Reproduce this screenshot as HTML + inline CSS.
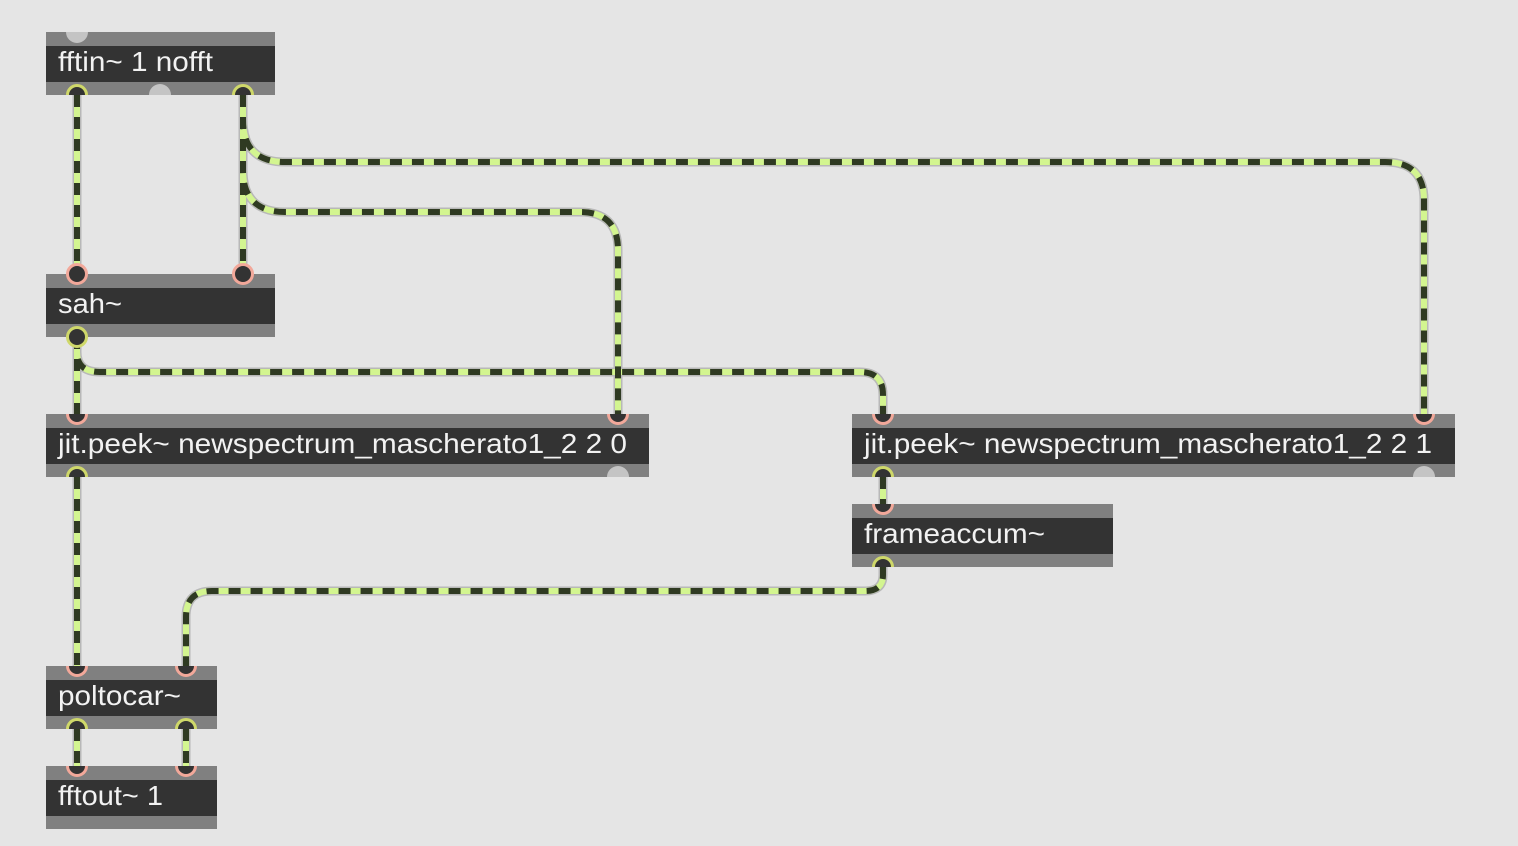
<!DOCTYPE html>
<html><head><style>
html,body{margin:0;padding:0;background:#e5e5e5;width:1518px;height:846px;overflow:hidden}
svg{display:block}
text{font-family:"Liberation Sans",Helvetica,Arial,sans-serif;font-size:28px;fill:#f2f2f2}
</style></head><body>
<svg width="1518" height="846" viewBox="0 0 1518 846">
<defs>
<clipPath id="c1"><rect x="46" y="32" width="229" height="63"/></clipPath>
<clipPath id="c3"><rect x="46" y="414" width="603" height="63"/></clipPath>
<clipPath id="c4"><rect x="852" y="414" width="603" height="63"/></clipPath>
<clipPath id="c5"><rect x="852" y="504" width="261" height="63"/></clipPath>
<clipPath id="c6"><rect x="46" y="666" width="171" height="63"/></clipPath>
<clipPath id="c7"><rect x="46" y="766" width="171" height="63"/></clipPath>
</defs>
<g id="boxes">
<rect x="46" y="32" width="229" height="63" fill="#808080"/><rect x="46" y="46" width="229" height="36" fill="#333"/>
<rect x="46" y="274" width="229" height="63" fill="#808080"/><rect x="46" y="288" width="229" height="36" fill="#333"/>
<rect x="46" y="414" width="603" height="63" fill="#808080"/><rect x="46" y="428" width="603" height="36" fill="#333"/>
<rect x="852" y="414" width="603" height="63" fill="#808080"/><rect x="852" y="428" width="603" height="36" fill="#333"/>
<rect x="852" y="504" width="261" height="63" fill="#808080"/><rect x="852" y="518" width="261" height="36" fill="#333"/>
<rect x="46" y="666" width="171" height="63" fill="#808080"/><rect x="46" y="680" width="171" height="36" fill="#333"/>
<rect x="46" y="766" width="171" height="63" fill="#808080"/><rect x="46" y="780" width="171" height="36" fill="#333"/>
</g>
<text x="58" y="71" textLength="155" lengthAdjust="spacingAndGlyphs">fftin~ 1 nofft</text>
<text x="58" y="313" textLength="64" lengthAdjust="spacingAndGlyphs">sah~</text>
<text x="58" y="453" textLength="569" lengthAdjust="spacingAndGlyphs">jit.peek~ newspectrum_mascherato1_2 2 0</text>
<text x="864" y="453" textLength="568" lengthAdjust="spacingAndGlyphs">jit.peek~ newspectrum_mascherato1_2 2 1</text>
<text x="864" y="543" textLength="181" lengthAdjust="spacingAndGlyphs">frameaccum~</text>
<text x="58" y="705" textLength="123" lengthAdjust="spacingAndGlyphs">poltocar~</text>
<text x="58" y="805" textLength="105" lengthAdjust="spacingAndGlyphs">fftout~ 1</text>
<g fill="#c4c4c4">
<circle cx="77" cy="32" r="11" clip-path="url(#c1)"/>
<circle cx="160" cy="95" r="11" clip-path="url(#c1)"/>
<circle cx="618" cy="477" r="11" clip-path="url(#c3)"/>
<circle cx="1424" cy="477" r="11" clip-path="url(#c4)"/>
</g>
<g fill="none" stroke-linecap="butt">
<g stroke="#b8b8b8" stroke-width="9">
<path id="p1" d="M77 95 V274"/>
<path id="p2" d="M243 95 V274"/>
<path id="p3" d="M243 95 V120 Q243 162 285 162 H1385 Q1424 162 1424 200 V414"/>
<path id="p4" d="M243 95 V170 Q243 212 285 212 H580 Q618 212 618 250 V414"/>
<path id="p5" d="M77 337 V414"/>
<path id="p6" d="M77 337 V352 Q77 372 100 372 H860 Q883 372 883 395 V414"/>
<path id="p7" d="M77 477 V666"/>
<path id="p8" d="M883 477 V504"/>
<path id="p9" d="M883 567 V575 Q883 591 865 591 H212 Q186 591 186 617 V666"/>
<path id="p10" d="M77 729 V766"/>
<path id="p11" d="M186 729 V766"/>
</g>
<g stroke="#d3f590" stroke-width="6">
<use href="#p1"/><use href="#p2"/><use href="#p3"/><use href="#p4"/><use href="#p5"/><use href="#p6"/><use href="#p7"/><use href="#p8"/><use href="#p9"/><use href="#p10"/><use href="#p11"/>
</g>
<g stroke="#2f3a22" stroke-width="6" stroke-dasharray="12 10">
<use href="#p1"/><use href="#p2"/><use href="#p3"/><use href="#p4"/><use href="#p5"/><use href="#p6"/><use href="#p7"/><use href="#p8"/><use href="#p9"/><use href="#p10"/><use href="#p11"/>
</g>
</g>
<g fill="#333" stroke-width="3">
<g stroke="#cfd86a">
<circle cx="77" cy="95" r="9.5" clip-path="url(#c1)"/>
<circle cx="243" cy="95" r="9.5" clip-path="url(#c1)"/>
<circle cx="77" cy="337" r="9.5"/>
<circle cx="77" cy="477" r="9.5" clip-path="url(#c3)"/>
<circle cx="883" cy="477" r="9.5" clip-path="url(#c4)"/>
<circle cx="883" cy="567" r="9.5" clip-path="url(#c5)"/>
<circle cx="77" cy="729" r="9.5" clip-path="url(#c6)"/>
<circle cx="186" cy="729" r="9.5" clip-path="url(#c6)"/>
</g>
<g stroke="#f2a89a">
<circle cx="77" cy="274" r="9.5"/>
<circle cx="243" cy="274" r="9.5"/>
<circle cx="77" cy="414" r="9.5" clip-path="url(#c3)"/>
<circle cx="618" cy="414" r="9.5" clip-path="url(#c3)"/>
<circle cx="883" cy="414" r="9.5" clip-path="url(#c4)"/>
<circle cx="1424" cy="414" r="9.5" clip-path="url(#c4)"/>
<circle cx="883" cy="504" r="9.5" clip-path="url(#c5)"/>
<circle cx="77" cy="666" r="9.5" clip-path="url(#c6)"/>
<circle cx="186" cy="666" r="9.5" clip-path="url(#c6)"/>
<circle cx="77" cy="766" r="9.5" clip-path="url(#c7)"/>
<circle cx="186" cy="766" r="9.5" clip-path="url(#c7)"/>
</g>
</g>
</svg>
</body></html>
